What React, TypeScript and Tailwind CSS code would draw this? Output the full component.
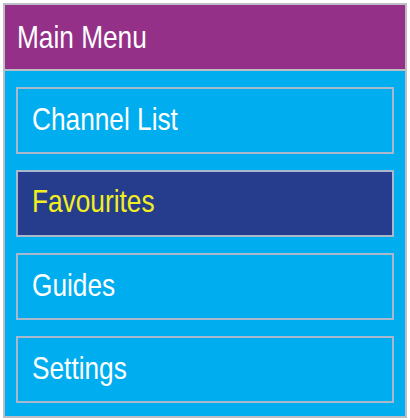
export default function App() {
  const items = ["Channel List", "Favourites", "Guides", "Settings"];
  const font = { fontFamily: '"Liberation Sans", Arial, sans-serif' };
  return (
    <div className="w-[410px] h-[420px] bg-white pt-[3px] pl-[3px]" style={font}>
      <div className="w-[404px] border-2 border-[#bdbdc6]">
        <div className="h-[66px] bg-[#953088] border-b-2 border-[#bdbdc6] flex items-center pl-[12px]">
          <span className="inline-block origin-left scale-x-[0.82] text-[32px] leading-none text-white whitespace-nowrap">Main Menu</span>
        </div>
        <div className="bg-[#00aeef] pt-[16px] pb-[13px] pl-[11px] pr-[11px] flex flex-col gap-[16px]">
          {items.map((it) => {
            const sel = it === "Favourites";
            return (
              <div
                key={it}
                className={
                  sel
                    ? "h-[67px] border-2 border-[#aab8cc] bg-[#263d8e] flex items-center pl-[14px] pb-[6px]"
                    : "h-[67px] border-2 border-[#aab8cc] bg-[#00aeef] flex items-center pl-[14px] pb-[4px]"
                }
              >
                <span
                  className={
                    sel
                      ? "inline-block origin-left scale-x-[0.82] text-[32px] leading-none text-[#f2ef1f] whitespace-nowrap"
                      : "inline-block origin-left scale-x-[0.82] text-[32px] leading-none text-white whitespace-nowrap"
                  }
                >
                  {it}
                </span>
              </div>
            );
          })}
        </div>
      </div>
    </div>
  );
}
